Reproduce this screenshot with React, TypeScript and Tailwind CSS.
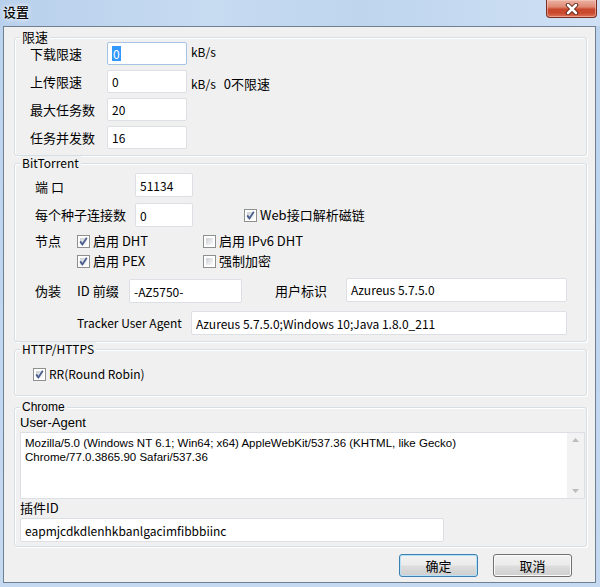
import React from "react";

function Group({
  title,
  className,
  titleClass,
  children,
}: {
  title: string;
  className: string;
  titleClass?: string;
  children?: React.ReactNode;
}) {
  return (
    <div
      className={
        "relative ml-[10px] w-[573px] rounded-[3px] border border-[#d5dfe5] shadow-[inset_1px_1px_0_#ffffff,1px_1px_0_#ffffff] " +
        className
      }
    >
      <span
        className={
          "absolute left-[5px] top-[-8px] bg-[#f0f0f0] px-[2px] leading-[14px] " +
          (titleClass ?? "text-[13px]")
        }
      >
        {title}
      </span>
      {children}
    </div>
  );
}

function TextBox({
  value,
  className,
  selected,
  focused,
}: {
  value: string;
  className: string;
  selected?: boolean;
  focused?: boolean;
}) {
  return (
    <div
      className={
        "flex shrink-0 items-center rounded-[2px] border bg-white pl-[4px] text-[12px] leading-[15px] " +
        (focused ? "border-[#a7c3e3] " : "border-[#dcdfe4] ") +
        className
      }
    >
      {selected ? (
        <span className="bg-[#3399ff] px-[1px] text-white">{value}</span>
      ) : (
        <span className="whitespace-nowrap">{value}</span>
      )}
    </div>
  );
}

function Check({ checked }: { checked: boolean }) {
  return (
    <span className="relative inline-block h-[13px] w-[13px] shrink-0 border border-[#8e8f8f] bg-white">
      <span className="absolute inset-[2px] bg-[linear-gradient(135deg,#cbced3_0%,#e8eaec_60%,#fbfbfb_100%)]" />
      {checked && (
        <svg
          className="absolute left-0 top-0"
          width="11"
          height="11"
          viewBox="0 0 11 11"
        >
          <path
            d="M2.2 5.4 L4.4 8.4 L8.8 1.8"
            fill="none"
            stroke="#4a5f8f"
            strokeWidth="1.8"
            strokeLinejoin="miter"
          />
        </svg>
      )}
    </span>
  );
}

function CheckItem({
  checked,
  label,
  className,
  labelClass,
}: {
  checked: boolean;
  label: string;
  className?: string;
  labelClass?: string;
}) {
  return (
    <div className={"flex items-center " + (className ?? "")}>
      <Check checked={checked} />
      <span className={"ml-[3px] whitespace-nowrap leading-[16px] " + (labelClass ?? "")}>
        {label}
      </span>
    </div>
  );
}

function CloseButton() {
  return (
    <div className="flex h-[18px] w-[51px] items-center justify-center rounded-b-[4px] border border-t-0 border-[#7a2e22] bg-[linear-gradient(180deg,#eab2a3_0%,#df8a74_40%,#c8472d_55%,#c9492f_75%,#dc7253_100%)] shadow-[inset_0_0_0_1px_rgba(255,210,200,0.5)]">
      <svg width="14" height="12" viewBox="0 0 14 12">
        <path
          d="M3 2 L11 10 M11 2 L3 10"
          stroke="#5a1d12"
          strokeWidth="4.4"
          strokeLinecap="round"
        />
        <path
          d="M3 2 L11 10 M11 2 L3 10"
          stroke="#ffffff"
          strokeWidth="2.6"
          strokeLinecap="round"
        />
      </svg>
    </div>
  );
}

function Btn({ label, primary }: { label: string; primary?: boolean }) {
  return (
    <div
      className={
        "flex h-[23px] w-[79px] items-center justify-center rounded-[3px] border bg-[linear-gradient(180deg,#f2f2f2_0%,#ebebeb_48%,#dddddd_52%,#cfcfcf_100%)] leading-[16px] " +
        (primary
          ? "border-[#3c7fb1] shadow-[inset_0_0_0_1px_#b6e1f7]"
          : "border-[#707070] shadow-[inset_0_0_0_1px_#fbfbfb]")
      }
    >
      {label}
    </div>
  );
}

export default function App() {
  return (
    <div className="flex h-[587px] w-[600px] flex-col overflow-hidden bg-[linear-gradient(180deg,#bcd3ee_0%,#c5daf1_100%)] font-['Noto_Sans_CJK_SC','Liberation_Sans',sans-serif] text-[12px] text-black">
      {/* title bar */}
      <div className="flex h-[26px] shrink-0 items-start bg-[linear-gradient(90deg,#b8d0ec_0%,#c7dbf1_35%,#bed5ee_60%,#cfe0f4_100%)]">
        <span className="ml-[3px] mt-[4px] text-[13px] font-medium leading-[16px] [text-shadow:0_0_6px_#ffffff,0_0_3px_#ffffff]">
          设置
        </span>
        <div className="flex-1" />
        <div className="mr-[3px]">
          <CloseButton />
        </div>
      </div>

      {/* client area */}
      <div className="ml-[3px] flex h-[557px] w-[593px] flex-col border border-[#6f8093] bg-[#f0f0f0] text-[13px]">
        {/* 限速 */}
        <Group title="限速" className="mt-[10px] h-[119px] pl-[15px] pt-[4px]">
          <div className="flex flex-col gap-[5px]">
            <div className="flex h-[23px] items-center">
              <span className="w-[77px] leading-[16px]">下载限速</span>
              <TextBox value="0" selected focused className="h-[23px] w-[80px]" />
              <span className="mb-[4px] ml-[4px] text-[12px] leading-[16px]">kB/s</span>
            </div>
            <div className="flex h-[23px] items-center">
              <span className="w-[77px] leading-[16px]">上传限速</span>
              <TextBox value="0" className="h-[23px] w-[80px]" />
              <span className="mt-[4px] ml-[4px] text-[12px] leading-[16px]">kB/s</span>
              <span className="mt-[4px] ml-[8px] leading-[16px]">0不限速</span>
            </div>
            <div className="flex h-[23px] items-center">
              <span className="w-[77px] leading-[16px]">最大任务数</span>
              <TextBox value="20" className="h-[23px] w-[80px]" />
            </div>
            <div className="flex h-[23px] items-center">
              <span className="w-[77px] leading-[16px]">任务并发数</span>
              <TextBox value="16" className="h-[23px] w-[80px]" />
            </div>
          </div>
        </Group>

        {/* BitTorrent */}
        <Group
          title="BitTorrent"
          titleClass="text-[12px]"
          className="mt-[7px] h-[179px] pl-[20px] pt-[9px]"
        >
          <div className="flex flex-col">
            <div className="flex h-[24px] items-center">
              <span className="mt-[4px] w-[100px] leading-[16px]">端&nbsp;口</span>
              <TextBox value="51134" className="h-[24px] w-[58px]" />
            </div>
            <div className="mt-[6px] flex h-[24px] items-center">
              <span className="w-[100px] leading-[16px]">每个种子连接数</span>
              <TextBox value="0" className="h-[24px] w-[58px]" />
              <CheckItem checked label="Web接口解析磁链" className="ml-[51px]" />
            </div>
            <div className="mt-[4px] flex h-[40px] items-start">
              <span className="mt-[2px] w-[42px] leading-[16px]">节点</span>
              <div className="flex w-[126px] flex-col">
                <CheckItem checked label="启用 DHT" className="h-[20px]" />
                <CheckItem checked label="启用 PEX" className="h-[20px]" />
              </div>
              <div className="flex flex-col">
                <CheckItem checked={false} label="启用 IPv6 DHT" className="h-[20px]" />
                <CheckItem checked={false} label="强制加密" className="h-[20px]" />
              </div>
            </div>
            <div className="mt-[8px] flex h-[24px] items-center">
              <span className="w-[42px] leading-[16px]">伪装</span>
              <span className="w-[52px] leading-[16px]">ID 前缀</span>
              <TextBox value="-AZ5750-" className="h-[24px] w-[113px]" />
              <span className="ml-[33px] w-[71px] leading-[16px]">用户标识</span>
              <TextBox value="Azureus 5.7.5.0" className="mt-[-3px] h-[24px] w-[221px]" />
            </div>
            <div className="mt-[8px] flex h-[24px] items-center">
              <span className="ml-[42px] w-[114px] text-[12px] leading-[16px]">
                Tracker User Agent
              </span>
              <TextBox
                value="Azureus 5.7.5.0;Windows 10;Java 1.8.0_211"
                className="h-[24px] w-[376px]"
              />
            </div>
          </div>
        </Group>

        {/* HTTP/HTTPS */}
        <Group
          title="HTTP/HTTPS"
          titleClass="text-[12px]"
          className="mt-[7px] h-[47px] pl-[18px] pt-[16px]"
        >
          <CheckItem
            checked
            label="RR(Round Robin)"
            labelClass="text-[12px]"
            className="h-[16px]"
          />
        </Group>

        {/* Chrome */}
        <Group
          title="Chrome"
          titleClass="font-['Liberation_Sans',sans-serif] text-[12px]"
          className="mt-[11px] h-[140px] pl-[5px] pt-[7px]"
        >
          <div className="font-['Liberation_Sans',sans-serif] text-[13px] leading-[15px]">
            User-Agent
          </div>
          <div className="mt-[2px] flex h-[67px] w-[565px] border border-[#dcdfe4] bg-white">
            <div className="flex-1 pl-[4px] pt-[4px] font-['Liberation_Sans',sans-serif] text-[11.5px] leading-[13.5px]">
              Mozilla/5.0 (Windows NT 6.1; Win64; x64) AppleWebKit/537.36 (KHTML, like Gecko)
              <br />
              Chrome/77.0.3865.90 Safari/537.36
            </div>
            <div className="flex w-[17px] flex-col items-center justify-between bg-[#f2f2f2] py-[5px]">
              <svg width="7" height="4" viewBox="0 0 7 4">
                <path d="M0 4 L3.5 0 L7 4 Z" fill="#bcbcbc" />
              </svg>
              <svg width="7" height="4" viewBox="0 0 7 4">
                <path d="M0 0 L3.5 4 L7 0 Z" fill="#bcbcbc" />
              </svg>
            </div>
          </div>
          <div className="mt-[1px] leading-[16px]">插件ID</div>
          <TextBox
            value="eapmjcdkdlenhkbanlgacimfibbbiinc"
            className="mt-[2px] h-[24px] w-[424px]"
          />
        </Group>

        {/* buttons */}
        <div className="ml-[395px] mt-[7px] flex gap-[15px]">
          <Btn label="确定" primary />
          <Btn label="取消" />
        </div>
      </div>
    </div>
  );
}
